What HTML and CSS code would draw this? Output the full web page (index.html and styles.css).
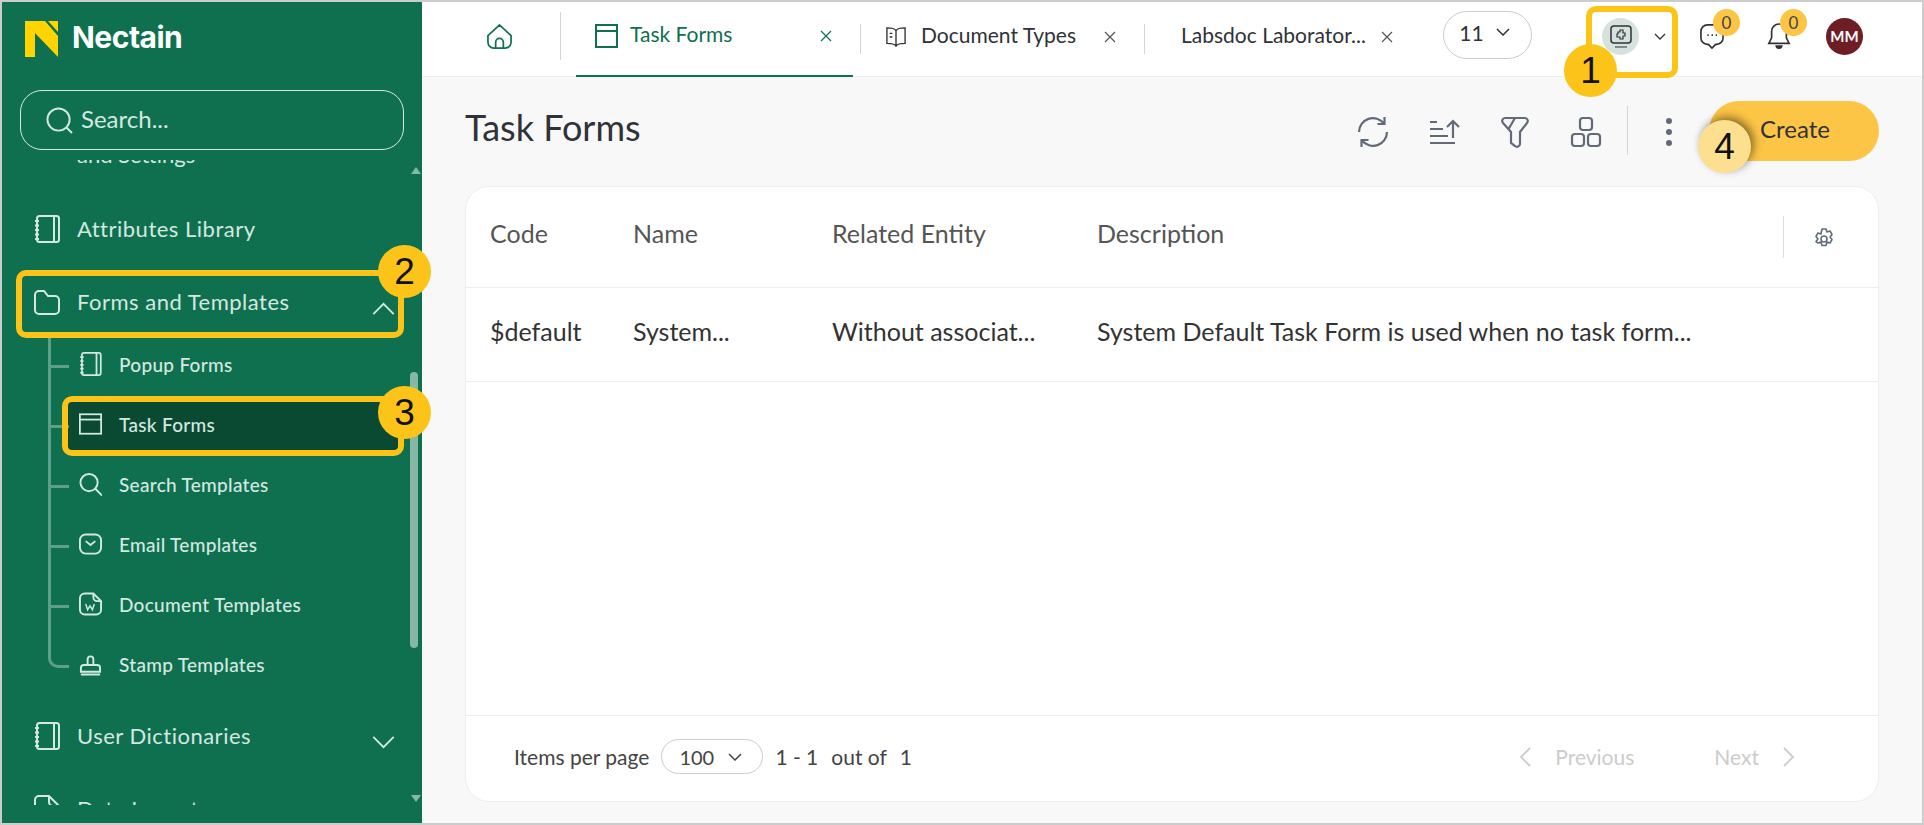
FILE: index.html
```html
<!DOCTYPE html>
<html>

<head>
    <title>Nectain | Task Forms</title>
    <meta name="viewport" content="width=device-width, initial-scale=1.0">
    <link rel="stylesheet" href="styles.css">
</head>

<body>
    <svg class="defs" width="0" height="0">
        <symbol id="notebook" viewBox="0 0 26 28">
            <rect x="3" y="1" width="22" height="26" rx="2.500" fill="none" stroke="currentColor" stroke-width="2" />
            <path d="M20 1v26M1 6h4M1 10.500h4M1 15h4M1 19.500h4M1 24h4" fill="none" stroke="currentColor" stroke-width="2" />
        </symbol>
        <symbol id="close" viewBox="0 0 12 12">
            <path d="M1 1l10 10M11 1L1 11" fill="none" stroke="currentColor" stroke-width="1.200" />
        </symbol>
    </svg>
    <div class="app">
        <aside class="sidebar">
            <div class="brand">
                <svg class="logo" viewBox="0 0 33 36">
                    <polygon points="0,0 20,0 33,15 33,36 10,12 10,36 0,36" fill="#ffd400" />
                    <polygon points="23,0 33,0 33,11" fill="#ffd400" />
                </svg>
                <span class="brand-name">Nectain</span>
            </div>
            <div class="search">
                <svg class="search-icon" viewBox="0 0 28 28">
                    <circle cx="13" cy="13" r="11.500" fill="none" stroke="currentColor" stroke-width="2" />
                    <path d="M21 21l6 6" fill="none" stroke="currentColor" stroke-width="2" />
                </svg>
                <span class="search-text">Search...</span>
            </div>
            <nav class="menu">
                <div class="clipped-label">and Settings</div>
                <a class="item">
                    <svg class="item-icon"><use href="#notebook" /></svg>
                    <span>Attributes Library</span>
                </a>
                <a class="item">
                    <svg class="item-icon" viewBox="0 0 26 26">
                        <path d="M1 6a4 4 0 0 1 4-4h5l4 5h7a4 4 0 0 1 4 4v10a4 4 0 0 1-4 4H5a4 4 0 0 1-4-4z" fill="none" stroke="currentColor" stroke-width="2" />
                    </svg>
                    <span>Forms and Templates</span>
                    <svg class="chevron" viewBox="0 0 24 14"><path d="M1 13L12 2l11 11" fill="none" stroke="currentColor" stroke-width="2" /></svg>
                </a>
                <ul class="submenu">
                    <li class="subitem">
                        <svg class="subitem-icon"><use href="#notebook" /></svg>
                        <span>Popup Forms</span>
                    </li>
                    <li class="subitem active">
                        <svg class="subitem-icon" viewBox="0 0 26 24">
                            <rect x="1" y="1" width="24" height="22" fill="none" stroke="currentColor" stroke-width="2" />
                            <path d="M1 7h24" fill="none" stroke="currentColor" stroke-width="2" />
                        </svg>
                        <span>Task Forms</span>
                    </li>
                    <li class="subitem">
                        <svg class="subitem-icon" viewBox="0 0 24 24">
                            <circle cx="10.500" cy="10.500" r="9" fill="none" stroke="currentColor" stroke-width="2" />
                            <path d="M17 17l7 7" fill="none" stroke="currentColor" stroke-width="2" />
                        </svg>
                        <span>Search Templates</span>
                    </li>
                    <li class="subitem">
                        <svg class="subitem-icon" viewBox="0 0 24 24">
                            <rect x="1" y="2" width="22" height="20" rx="6" fill="none" stroke="currentColor" stroke-width="2" />
                            <path d="M7 9l5 4 5-4" fill="none" stroke="currentColor" stroke-width="2" />
                        </svg>
                        <span>Email Templates</span>
                    </li>
                    <li class="subitem">
                        <svg class="subitem-icon" viewBox="0 0 24 24">
                            <path d="M6 1h9l8 8v9a5 5 0 0 1-5 5H6a5 5 0 0 1-5-5V6a5 5 0 0 1 5-5zM15 1v4a4 4 0 0 0 4 4h4" fill="none" stroke="currentColor" stroke-width="2" />
                            <path d="M7 12l2 6 2.500-4 2.500 4 2-6" fill="none" stroke="currentColor" stroke-width="1.500" />
                        </svg>
                        <span>Document Templates</span>
                    </li>
                    <li class="subitem">
                        <svg class="subitem-icon" viewBox="0 0 24 24">
                            <path d="M9 13V7a3 3 0 1 1 6 0v6M2 20v-4a3 3 0 0 1 3-3h14a3 3 0 0 1 3 3v4zM2 23h20" fill="none" stroke="currentColor" stroke-width="2" />
                        </svg>
                        <span>Stamp Templates</span>
                    </li>
                </ul>
                <a class="item dictionaries">
                    <svg class="item-icon"><use href="#notebook" /></svg>
                    <span>User Dictionaries</span>
                    <svg class="chevron" viewBox="0 0 24 14"><path d="M1 1l11 11L23 1" fill="none" stroke="currentColor" stroke-width="2" /></svg>
                </a>
                <a class="item">
                    <svg class="item-icon" viewBox="0 0 26 28">
                        <path d="M1 26V5a4 4 0 0 1 4-4h10l10 10v15M15 1v6a4 4 0 0 0 4 4h6" fill="none" stroke="currentColor" stroke-width="2" />
                    </svg>
                    <span>Data Import</span>
                </a>
            </nav>
            <div class="scroll-up"></div>
            <div class="scroll-thumb"></div>
            <div class="scroll-down"></div>
        </aside>

        <main class="main">
            <header class="topbar">
                <div class="home">
                    <svg class="home-icon" viewBox="0 0 28 26">
                        <path d="M2 12L14 1l12 11v7a6 6 0 0 1-6 6H8a6 6 0 0 1-6-6zM10 25v-6a4 4 0 0 1 8 0v6" fill="none" stroke="currentColor" stroke-width="1.800" />
                    </svg>
                </div>
                <div class="tab tab-current">
                    <svg class="tab-icon" viewBox="0 0 23 24">
                        <rect x="1" y="1" width="21" height="22" fill="none" stroke="currentColor" stroke-width="2" />
                        <path d="M1 7h21" fill="none" stroke="currentColor" stroke-width="2" />
                    </svg>
                    <span class="tab-title">Task Forms</span>
                    <svg class="tab-close"><use href="#close" /></svg>
                </div>
                <div class="tab tab-docs">
                    <svg class="tab-icon" viewBox="0 0 22 24">
                        <path d="M11 5C9 2 5 2 1 2v17c4 0 8 0 10 3 2-3 6-3 10-3V2c-4 0-8 0-10 3zM11 5v17M4 8h3M4 12h3" fill="none" stroke="currentColor" stroke-width="1.500" />
                    </svg>
                    <span class="tab-title">Document Types</span>
                    <svg class="tab-close"><use href="#close" /></svg>
                </div>
                <div class="tab tab-labs">
                    <span class="tab-title">Labsdoc Laborator...</span>
                    <svg class="tab-close"><use href="#close" /></svg>
                </div>
                <div class="tab-count">
                    <span>11</span>
                    <svg class="small-chevron" viewBox="0 0 14 8"><path d="M1 1l6 6 6-6" fill="none" stroke="currentColor" stroke-width="1.500" /></svg>
                </div>
                <div class="tools">
                    <div class="app-switch">
                        <span class="app-bubble">
                            <svg class="app-icon" viewBox="0 0 24 24">
                                <rect x="2" y="1" width="20" height="17" rx="3" fill="none" stroke="currentColor" stroke-width="1.500" />
                                <path d="M6 22h12M9 7h2V5h3v3h2v3h-2v3h-3v-2H8V9h1z" fill="none" stroke="currentColor" stroke-width="1.200" />
                            </svg>
                        </span>
                        <svg class="tiny-chevron" viewBox="0 0 12 8"><path d="M1 1l5 5 5-5" fill="none" stroke="currentColor" stroke-width="1.300" /></svg>
                    </div>
                    <div class="notify notify-chat">
                        <svg class="notify-icon" viewBox="0 0 26 28">
                            <path d="M8 2h10a7 7 0 0 1 7 7v7a7 7 0 0 1-7 7h-1l-4 4-4-4H8a7 7 0 0 1-7-7V9a7 7 0 0 1 7-7z" fill="none" stroke="currentColor" stroke-width="1.800" />
                            <path d="M8 13h1.500M12.500 13H14M17 13h1.500" fill="none" stroke="currentColor" stroke-width="2" />
                        </svg>
                        <span class="badge">0</span>
                    </div>
                    <div class="notify">
                        <svg class="notify-icon" viewBox="0 0 26 28">
                            <path d="M13 1a8 8 0 0 1 8 8v7l3 6H2l3-6V9a8 8 0 0 1 8-8z" fill="none" stroke="currentColor" stroke-width="1.800" />
                            <path d="M9 24a4 4 0 0 0 8 0z" fill="currentColor" />
                        </svg>
                        <span class="badge">0</span>
                    </div>
                    <div class="avatar">MM</div>
                </div>
            </header>

            <section class="page">
                <div class="page-head">
                    <h1>Task Forms</h1>
                    <div class="actions">
                        <svg class="action-icon" viewBox="0 0 32 32">
                            <path d="M2 16A14 14 0 0 1 27 7.500M30 16A14 14 0 0 1 5 24.500M27.500 1v7h-7M4.500 31v-7h7" fill="none" stroke="currentColor" stroke-width="2.200" />
                        </svg>
                        <svg class="action-icon" viewBox="0 0 32 32">
                            <path d="M2 6h7M2 13h13M2 20h18M2 27h25M25 22V5M19 11l6-6 6 6" fill="none" stroke="currentColor" stroke-width="2.200" />
                        </svg>
                        <svg class="action-icon" viewBox="0 0 32 32">
                            <path d="M6 2h20a3 3 0 0 1 2 5l-7 9v12a3 3 0 0 1-5 2l-4-3V16L4 7a3 3 0 0 1 2-5zM16 2L9 14" fill="none" stroke="currentColor" stroke-width="2.200" />
                        </svg>
                        <svg class="action-icon" viewBox="0 0 32 32">
                            <rect x="10" y="2" width="12" height="12" rx="3" fill="none" stroke="currentColor" stroke-width="2.200" />
                            <rect x="2" y="18" width="12" height="12" rx="3" fill="none" stroke="currentColor" stroke-width="2.200" />
                            <rect x="18" y="18" width="12" height="12" rx="3" fill="none" stroke="currentColor" stroke-width="2.200" />
                        </svg>
                        <span class="actions-divider"></span>
                        <span class="more"><i></i><i></i><i></i></span>
                        <button class="create">Create</button>
                    </div>
                </div>

                <div class="card">
                    <div class="row row-head">
                        <span class="col-code">Code</span>
                        <span class="col-name">Name</span>
                        <span class="col-entity">Related Entity</span>
                        <span class="col-desc">Description</span>
                        <span class="col-settings">
                            <svg class="gear" viewBox="0 0 24 24">
                                <path d="M10 2h4l1 3 3-1 2 3.500-2 2.500 2 2.500-2 3.500-3-1-1 3.500h-4l-1-3.500-3 1L4 14.500 6 12 4 9.500 6 6l3 1z" fill="none" stroke="currentColor" stroke-width="1.600" stroke-linejoin="round" />
                                <circle cx="12" cy="12" r="3" fill="none" stroke="currentColor" stroke-width="1.600" />
                            </svg>
                        </span>
                    </div>
                    <div class="row row-body">
                        <span class="col-code">$default</span>
                        <span class="col-name">System...</span>
                        <span class="col-entity">Without associat...</span>
                        <span class="col-desc">System Default Task Form is used when no task form...</span>
                    </div>
                    <div class="card-space"></div>
                    <div class="pager">
                        <span class="pager-label">Items per page</span>
                        <span class="per-page">
                            <span>100</span>
                            <svg class="small-chevron" viewBox="0 0 14 8"><path d="M1 1l6 6 6-6" fill="none" stroke="currentColor" stroke-width="1.500" /></svg>
                        </span>
                        <span class="pager-range">1 - 1</span>
                        <span class="pager-of">out of</span>
                        <span class="pager-total">1</span>
                        <span class="pager-nav">
                            <svg class="nav-chevron" viewBox="0 0 12 20"><path d="M11 1L2 10l9 9" fill="none" stroke="currentColor" stroke-width="1.800" /></svg>
                            <span class="nav-prev">Previous</span>
                            <span class="nav-next">Next</span>
                            <svg class="nav-chevron" viewBox="0 0 12 20"><path d="M1 1l9 9-9 9" fill="none" stroke="currentColor" stroke-width="1.800" /></svg>
                        </span>
                    </div>
                </div>
            </section>
        </main>
    </div>

    <div class="mark mark-switch"></div>
    <div class="mark mark-forms"></div>
    <div class="mark mark-task"></div>
    <div class="callout callout-1">1</div>
    <div class="callout callout-2">2</div>
    <div class="callout callout-3">3</div>
    <div class="callout callout-4">4</div>
</body>

</html>
```

FILE: styles.css
```css
* {
    box-sizing: border-box;
}

body {
    margin: 0;
    height: 825px;
    overflow: hidden;
    position: relative;
    font-family: Lato, "Open Sans", sans-serif;
    background-color: #ccc;
    padding: 2px;
}

.defs {
    position: absolute;
}

.app {
    display: flex;
    height: 821px;
}

/* sidebar */

.sidebar {
    position: relative;
    width: 420px;
    flex: none;
    background-color: #0f7050;
    color: #d5e8e0;
}

.brand {
    display: flex;
    align-items: center;
    height: 88px;
    padding: 0 0 14px 23px;
}

.logo {
    width: 33px;
    height: 36px;
}

.brand-name {
    margin-left: 14px;
    margin-top: -5px;
    font-family: Inter, "Liberation Sans", sans-serif;
    font-weight: 700;
    font-size: 30px;
    letter-spacing: -0.5px;
    color: #fff;
}

.search {
    display: flex;
    align-items: center;
    margin-left: 18px;
    width: 384px;
    height: 60px;
    border: 1px solid #d5e8e0;
    border-radius: 22px;
    padding-left: 25px;
    font-size: 24px;
}

.search-text {
    margin-top: -4px;
}

.search-icon {
    width: 27px;
    height: 27px;
    margin-right: 8px;
}

.menu {
    height: 645px;
    margin-top: 10px;
    overflow: hidden;
}

.clipped-label {
    margin: -19px 0 30px 75px;
    font-size: 22px;
    line-height: 28px;
}

.item {
    display: flex;
    align-items: center;
    position: relative;
    height: 60px;
    margin-bottom: 13px;
    padding-left: 32px;
    font-size: 22px;
    letter-spacing: 0.5px;
}

.item span {
    margin-top: -2px;
}

.item-icon {
    width: 26px;
    height: 28px;
    margin-right: 17px;
}

.chevron {
    position: absolute;
    left: 370px;
    top: 30px;
    width: 23px;
    height: 13px;
}

.submenu {
    list-style: none;
    margin: -11px 0 12px;
    padding: 0;
}

.subitem {
    display: flex;
    align-items: center;
    position: relative;
    height: 60px;
    padding-left: 77px;
    font-size: 19px;
    font-weight: 500;
    letter-spacing: 0.3px;
}

.subitem::before {
    content: "";
    position: absolute;
    left: 46px;
    top: 0;
    width: 18px;
    height: 31px;
    border-left: 3px solid #5f9e88;
    border-bottom: 3px solid #5f9e88;
}

.subitem::after {
    content: "";
    position: absolute;
    left: 46px;
    top: 31px;
    height: 29px;
    border-left: 3px solid #5f9e88;
}

.subitem:last-child::before {
    border-bottom-left-radius: 10px;
}

.subitem:last-child::after {
    display: none;
}

.subitem-icon {
    width: 23px;
    height: 24px;
    margin-right: 17px;
    position: relative;
    z-index: 1;
}

.active {
    background: linear-gradient(#0a4a33, #0a4a33) no-repeat 65px 2px / 336px 56px;
}

.scroll-up,
.scroll-down {
    position: absolute;
    left: 409px;
    width: 0;
    height: 0;
    border-left: 5px solid transparent;
    border-right: 5px solid transparent;
}

.scroll-up {
    top: 165px;
    border-bottom: 7px solid #87b8a6;
}

.scroll-down {
    top: 793px;
    border-top: 7px solid #87b8a6;
}

.scroll-thumb {
    position: absolute;
    left: 408px;
    top: 370px;
    width: 8px;
    height: 276px;
    border-radius: 4px;
    background-color: #87b8a6;
}

/* top bar */

.main {
    flex: 1;
    display: flex;
    flex-direction: column;
    background-color: #f8f8f8;
}

.topbar {
    display: flex;
    align-items: flex-start;
    height: 75px;
    background-color: #fff;
    border-bottom: 1px solid #eee;
    color: #2f3237;
}

.home {
    display: flex;
    align-items: center;
    justify-content: center;
    width: 139px;
    height: 48px;
    margin-top: 10px;
    padding-left: 16px;
    border-right: 1px solid #d5d5d5;
    color: #0f7050;
}

.home-icon {
    width: 27px;
    height: 25px;
}

.tab {
    display: flex;
    align-items: center;
    height: 75px;
    font-size: 21px;
    padding-bottom: 6px;
    position: relative;
}

.tab-title {
    margin-top: -4px;
}

.tab-current {
    width: 277px;
    margin: 0 7px 0 15px;
    padding-left: 19px;
    border-bottom: 2px solid #0f7050;
    color: #0f7050;
}

.tab-current .tab-title {
    margin-left: -2px;
}

.tab-docs {
    width: 284px;
    padding-left: 26px;
}

.tab-labs {
    width: 299px;
    padding-left: 37px;
}

.tab-docs::before,
.tab-labs::before {
    content: "";
    position: absolute;
    left: 0;
    top: 22px;
    height: 30px;
    border-left: 1px solid #d5d5d5;
}

.tab-icon {
    width: 23px;
    height: 24px;
    margin-right: 14px;
}

.tab-docs .tab-icon {
    width: 20px;
    margin-right: 15px;
}

.tab-close {
    width: 12px;
    height: 12px;
    margin-left: auto;
    color: #555;
}

.tab-current .tab-close {
    margin-right: 21px;
    color: #0f7050;
}

.tab-docs .tab-close {
    margin-right: 28px;
}

.tab-labs .tab-close {
    margin-right: 50px;
}

.tab-count {
    display: flex;
    align-items: center;
    justify-content: center;
    gap: 12px;
    width: 89px;
    height: 48px;
    margin-top: 9px;
    padding: 0 6px 6px 0;
    border: 1px solid #ccc;
    border-radius: 24px;
    font-size: 21px;
}

.small-chevron {
    width: 14px;
    height: 8px;
}

.tools {
    position: relative;
    flex: 1;
}

.app-switch {
    position: absolute;
    left: 70px;
    top: 16px;
    display: flex;
    align-items: center;
    gap: 15px;
}

.app-bubble {
    display: flex;
    align-items: center;
    justify-content: center;
    width: 37px;
    height: 37px;
    border-radius: 50%;
    background-color: #d5e2dd;
}

.app-icon {
    width: 24px;
    height: 24px;
}

.tiny-chevron {
    width: 12px;
    height: 8px;
}

.notify {
    position: absolute;
    left: 235px;
    top: 20px;
}

.notify-chat {
    left: 168px;
}

.notify-icon {
    display: block;
    width: 24px;
    height: 28px;
}

.badge {
    position: absolute;
    left: 13px;
    top: -13px;
    width: 27px;
    height: 27px;
    border-radius: 50%;
    background-color: #fdc546;
    text-align: center;
    font-size: 17px;
    line-height: 27px;
    color: #444;
}

.avatar {
    position: absolute;
    left: 294px;
    top: 16px;
    width: 37px;
    height: 37px;
    border-radius: 50%;
    background-color: #6f1d25;
    color: #fff;
    text-align: center;
    font-size: 15px;
    font-weight: 700;
    line-height: 37px;
}

/* page */

.page {
    flex: 1;
    display: flex;
    flex-direction: column;
    padding: 0 43px 21px 43px;
}

.page-head {
    display: flex;
    align-items: center;
    justify-content: space-between;
    height: 109px;
    padding-bottom: 2px;
}

h1 {
    margin: -8px 0 0;
    font-size: 36px;
    font-weight: 400;
    color: #2f3237;
}

.actions {
    display: flex;
    align-items: center;
    color: #626a7a;
}

.action-icon {
    width: 32px;
    height: 32px;
    margin: 2px 39px 0 0;
}

.actions-divider {
    height: 49px;
    margin-left: -14px;
    border-left: 1px solid #d5d5d5;
}

.more {
    display: flex;
    flex-direction: column;
    gap: 5px;
    margin: 2px 0 0 38px;
}

.more i {
    display: block;
    width: 6px;
    height: 6px;
    border-radius: 50%;
    background-color: #626a7a;
}

.create {
    width: 170px;
    height: 60px;
    margin-left: 37px;
    padding: 0 0 4px 2px;
    border: 0;
    border-radius: 30px;
    background-color: #fdc546;
    font-family: inherit;
    font-size: 24px;
    color: #2f3237;
}

.card {
    flex: 1;
    display: flex;
    flex-direction: column;
    background-color: #fff;
    border: 1px solid #eee;
    border-radius: 24px;
}

.row {
    display: flex;
    align-items: center;
    font-size: 25px;
    border-bottom: 1px solid #eee;
}

.row-head {
    height: 101px;
    color: #555;
}

.row-body {
    height: 94px;
    color: #333;
}

.row span:not(.col-settings) {
    margin-top: -8px;
}

.col-code {
    width: 167px;
    padding-left: 24px;
    flex: none;
}

.col-name {
    width: 199px;
    flex: none;
}

.col-entity {
    width: 265px;
    flex: none;
}

.col-desc {
    width: 686px;
    flex: none;
}

.col-settings {
    display: flex;
    align-items: center;
    height: 42px;
    padding-left: 28px;
    border-left: 1px solid #ddd;
    color: #626a7a;
}

.gear {
    width: 24px;
    height: 24px;
    margin-top: 4px;
}

.card-space {
    flex: 1;
}

.pager {
    display: flex;
    align-items: center;
    height: 86px;
    padding: 0 0 4px 48px;
    border-top: 1px solid #eee;
    font-size: 21px;
    color: #444;
}

.per-page {
    display: flex;
    align-items: center;
    justify-content: space-between;
    width: 102px;
    height: 35px;
    margin: 0 12px;
    padding: 0 20px 0 17px;
    border: 1px solid #ccc;
    border-radius: 18px;
    font-size: 20px;
}

.pager-of {
    margin: 0 13px;
}

.pager-nav {
    display: flex;
    align-items: center;
    margin-left: auto;
    margin-right: 83px;
    color: #ccc;
}

.nav-chevron {
    width: 12px;
    height: 20px;
}

.nav-prev {
    margin: 0 80px 0 24px;
}

.nav-next {
    margin-right: 24px;
}

/* tutorial marks, they lie over the app */

.mark {
    position: absolute;
    border: 6px solid #fcc419;
    border-radius: 10px;
}

.mark-switch {
    left: 1586px;
    top: 6px;
    width: 92px;
    height: 72px;
}

.mark-forms {
    left: 16px;
    top: 270px;
    width: 388px;
    height: 68px;
}

.mark-task {
    left: 62px;
    top: 396px;
    width: 342px;
    height: 60px;
}

.callout {
    position: absolute;
    width: 53px;
    height: 53px;
    border-radius: 50%;
    background-color: #fcc419;
    color: #111;
    font-family: "Liberation Sans", sans-serif;
    font-size: 37px;
    line-height: 53px;
    text-align: center;
}

.callout-1 {
    left: 1564px;
    top: 44px;
}

.callout-2 {
    left: 378px;
    top: 245px;
}

.callout-3 {
    left: 378px;
    top: 386px;
}

.callout-4 {
    left: 1698px;
    top: 120px;
    background-color: #fde08f;
    box-shadow: 3px -3px 8px rgba(0, 0, 0, 0.45);
}
```
